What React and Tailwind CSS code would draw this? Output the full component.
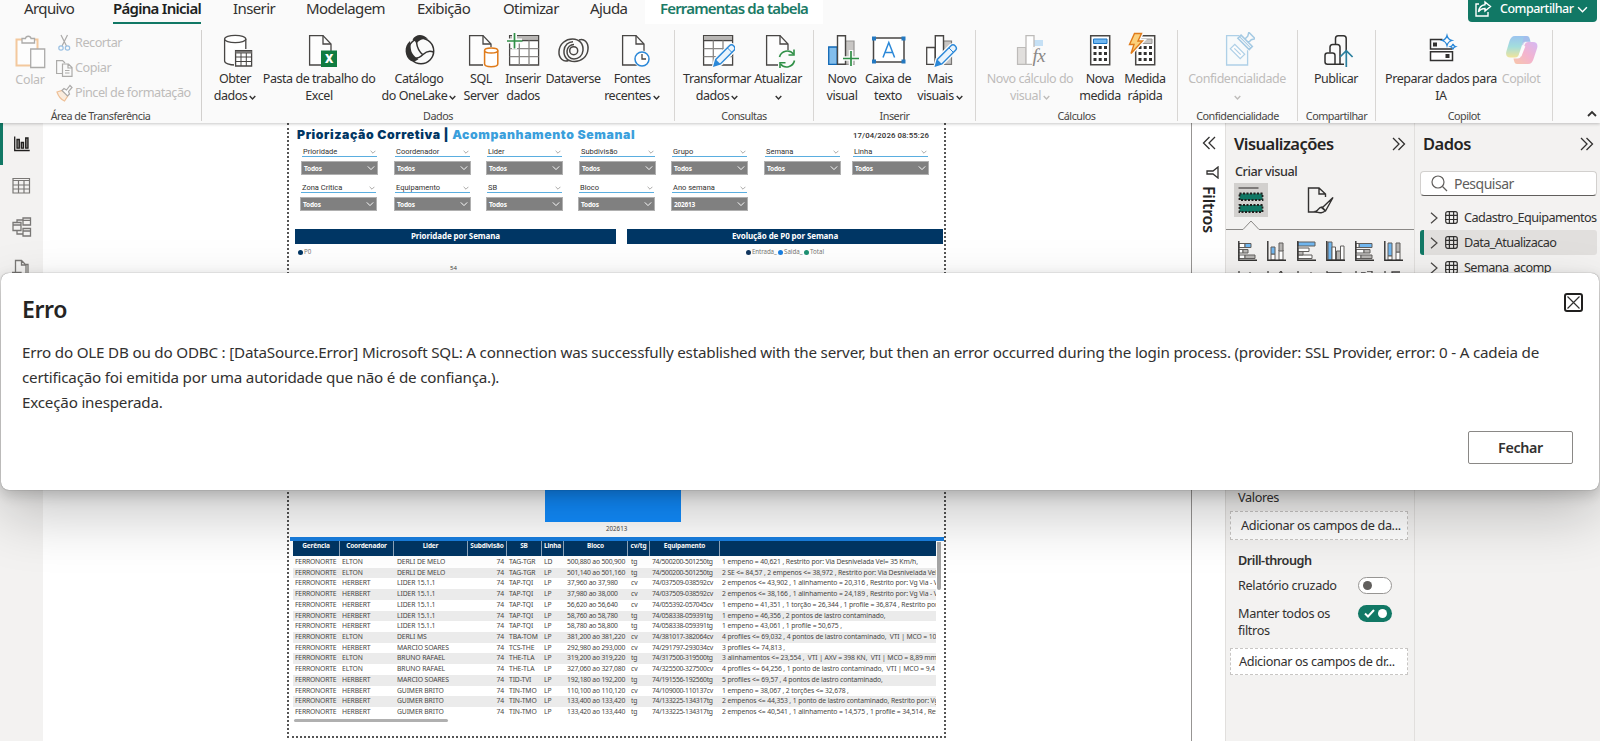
import clsx from "clsx";

const INK = "#484644";
const GREEN = "#117865";

const Chevron = ({ size = 7, className = "", width = 1.6 }) => (
  <svg width={size} height={size} viewBox="0 0 10 10" fill="none" className={className}>
    <path d="M1 3l4 4 4-4" stroke="currentColor" strokeWidth={width} />
  </svg>
);

// ---------- ribbon icons ----------
const Svg = ({ children, opacity = 1 }) => (
  <svg width="36" height="36" viewBox="0 0 36 36" fill="none" opacity={opacity} className="shrink-0">
    {children}
  </svg>
);

const Doc = ({ x = 7 }) => (
  <g transform={`translate(${x} 3)`} stroke={INK} strokeWidth="1.3">
    <path d="M.6.6h13.4l8 8.4v21H.6z" fill="#fdfdfd" />
    <path d="M14 .6V9h8" />
  </g>
);

const Grid = () => (
  <g stroke={INK} strokeWidth="1.3">
    <path d="M4.6 3.6h29v29.4h-29z" fill="#fff" />
    <path d="M5 4h28v4.5H5z" fill="#b8b6b4" stroke="none" />
    <path d="M4.6 8.6h29" />
    <path d="M4.6 16.6h29M4.6 24.6h29M14.3 8.6V33M24 8.6V33" stroke="#8a8886" />
  </g>
);

const Pencil = ({ x = 0 }) => (
  <g transform={`translate(${x} 0)`}>
    <path d="M15 34l1.8-6.6L30.2 14a3.2 3.2 0 0 1 4.6 4.6L21.4 32z" fill="#fff" stroke="#fafafa" strokeWidth="4" />
    <path d="M15 34l1.8-6.6L30.2 14a3.2 3.2 0 0 1 4.6 4.6L21.4 32z" fill="#eaf4fc" stroke="#2b88d8" strokeWidth="1.4" />
    <path d="M15 34l1.8-6.6 4.6 4.6z" fill="#2b88d8" />
    <path d="M28.5 16l4.4 4.4" stroke="#2b88d8" />
  </g>
);

const Keypad = () => (
  <g>
    <path d="M8.7 3.7h19v29h-19z" fill="#fff" stroke={INK} strokeWidth="1.5" />
    <path
      d="M11.5 14h3v3h-3zM16.7 14h3v3h-3zM22 14h3v3h-3zM11.5 20h3v3h-3zM16.7 20h3v3h-3zM22 20h3v3h-3zM11.5 26h3v3h-3zM16.7 26h3v3h-3zM22 26h3v3h-3z"
      fill="#323130"
    />
  </g>
);

const icons = {
  obter: (
    <Svg>
      <path d="M7.6 7v22c0 2.2 5 4 10.6 4s10.6-1.8 10.6-4V7" stroke={INK} strokeWidth="1.3" fill="#fff" />
      <ellipse cx="18.2" cy="7" rx="10.6" ry="3.6" stroke={INK} strokeWidth="1.3" fill="#fff" />
      <path d="M17 17h19v19H17z" fill="#fafafa" />
      <path d="M18.6 18.6h16v15.4h-16z" fill="#fff" stroke={INK} strokeWidth="1.3" />
      <path d="M18.6 20.3h16" stroke="#797775" strokeWidth="2.6" />
      <path d="M18.6 25h16M18.6 29.500h16M24 21v13M29.300 21v13" stroke={INK} />
    </Svg>
  ),
  excel: (
    <Svg>
      <Doc x={8} />
      <path d="M20 18.5h16v16.5H20z" fill="#107c41" />
      <text x="28" y="31" textAnchor="middle" fontSize="11.5" fontWeight="800" fill="#fff" fontFamily="Open Sans">
        X
      </text>
    </Svg>
  ),
  onelake: (
    <Svg>
      <circle cx="20" cy="19" r="12.7" stroke="#323130" strokeWidth="1.5" />
      <path d="M10 29C3.500 25 2.500 14 9 9c1.200 5.500-.2 9.500 3.500 14 1.500 2 3.200 3 5 4-2 2-5 3-7.500 2z" fill="#323130" />
      <path d="M11.500 7.500C15 1.500 22 1.500 27 7c-4.500-.8-9 1-11.500 4.500-.8-1.700-2-3-4-4z" fill="#323130" />
      <path d="M15.500 10c.5 5.500 3 10 6.500 13M32.500 20c-4.500-2-7.500-.5-10.500 2.500s-6.500 5-12 3" stroke="#323130" strokeWidth="1.5" />
    </Svg>
  ),
  sql: (
    <Svg>
      <Doc x={6} />
      <path d="M20 15h16v21H20z" fill="#fafafa" />
      <path d="M21.6 18.5V32c0 1.5 3 2.7 6.6 2.7s6.6-1.2 6.6-2.7V18.500" stroke="#e07b1a" strokeWidth="1.5" fill="#fff" />
      <ellipse cx="28.2" cy="18.5" rx="6.6" ry="2.5" stroke="#e07b1a" strokeWidth="1.5" fill="#fff" />
    </Svg>
  ),
  inserir: (
    <Svg>
      <Grid />
      <path d="M9.500 1v16M2 9h15" stroke="#fafafa" strokeWidth="5" />
      <path d="M9.500 1v15.500M2 9h15.500" stroke="#2f8f46" strokeWidth="1.7" />
    </Svg>
  ),
  dataverse: (
    <Svg>
      <g stroke={INK} strokeWidth="1.5">
        <path d="M13.500 28.500C8.500 30.500 3.500 26 4 19.500 4.500 11.500 11 7 17.500 7c7 0 11 5 10.500 11.500-.5 5.500-4.500 8.500-9 8.500-4 0-7.500-3.500-7-8 .3-4 3.500-6.500 7-6.500" />
        <path d="M24 8c5-2 9.500 2.500 9 9C32.500 25 26 29.500 19.500 29.500c-7 0-11-4.500-10.500-11C9.500 13 13.500 9.700 18 9.700" />
        <circle cx="18.700" cy="18.700" r="4" />
      </g>
    </Svg>
  ),
  fontes: (
    <Svg>
      <Doc x={8} />
      <circle cx="28" cy="27" r="8.5" fill="#fafafa" />
      <circle cx="28" cy="27" r="7" stroke="#2b88d8" strokeWidth="1.5" fill="#fff" />
      <path d="M28 22v5h4" stroke={INK} strokeWidth="1.3" />
    </Svg>
  ),
  transformar: (
    <Svg>
      <Grid />
      <Pencil />
    </Svg>
  ),
  atualizar: (
    <Svg>
      <Doc x={6} />
      <path d="M18 18h18v17H18z" fill="#fafafa" />
      <path d="M19.500 25a8 8 0 0 1 14-3M34.500 28.500a8 8 0 0 1-14 3.500" stroke="#2f8f46" strokeWidth="1.6" />
      <path d="M34 17.500V23h-5.500M20 36v-5.200h5.500" stroke="#2f8f46" strokeWidth="1.6" />
    </Svg>
  ),
  novo: (
    <Svg>
      <path d="M4.700 15h8.500v17.300H4.700z" fill="#83beec" stroke="#1068b5" strokeWidth="1.3" />
      <path d="M21.500 9h8.500v23.300h-8.500z" fill="#c8c6c4" stroke="#979593" strokeWidth="1.2" />
      <path d="M13.500 3.700h8v28.600h-8z" fill="#fff" stroke={INK} strokeWidth="1.4" />
      <path d="M27 18v17M19 26.500h17" stroke="#fafafa" strokeWidth="4.5" />
      <path d="M27 19v15M19 26.500h16" stroke="#2f8f46" strokeWidth="1.7" />
    </Svg>
  ),
  caixa: (
    <Svg>
      <path d="M3.500 6h30.500v24H3.500z" fill="#fff" stroke={INK} strokeWidth="1.5" />
      <path d="M2 4.500h4v4H2zM31.500 4.500h4v4h-4zM2 27.500h4v4H2zM31.500 27.500h4v4h-4z" fill="#2378c0" />
      <path d="M13 25.500l5.800-15 5.800 15M15 20.500h7.600" stroke="#2b88d8" strokeWidth="1.5" />
    </Svg>
  ),
  mais: (
    <Svg>
      <path d="M4.700 15.500h8.500v16.800H4.700z" fill="#fff" stroke={INK} strokeWidth="1.3" />
      <path d="M21.500 9h8v23.300h-8z" fill="#c8c6c4" stroke="#797775" strokeWidth="1.2" />
      <path d="M13.300 3.700h8.200v28.600h-8.200z" fill="#fff" stroke={INK} strokeWidth="1.4" />
      <Pencil x={-1.5} />
    </Svg>
  ),
  calculo: (
    <Svg>
      <path d="M5.500 15.500H14v16.800H5.500z" fill="#e1dfdd" stroke="#bdbbb9" strokeWidth="1.2" />
      <path d="M22 8h9v6h-9z" fill="#c5e0f5" />
      <path d="M14 3.700h8v28.600h-8z" fill="#fff" stroke="#bdbbb9" strokeWidth="1.3" />
      <path d="M20 15h15v18H20z" fill="#fafafa" />
      <text x="20.500" y="29.500" fontSize="19" fontStyle="italic" fill="#8a8886" fontFamily="Liberation Serif">
        fx
      </text>
    </Svg>
  ),
  medida: (
    <Svg>
      <Keypad />
      <path d="M11.500 7h13.500v4.500H11.500z" fill="#71b7f0" stroke="#1d76c4" />
    </Svg>
  ),
  rapida: (
    <Svg>
      <Keypad />
      <path d="M14 7h11v4.500H14z" fill="#c8c6c4" stroke="#979593" />
      <path d="M7.500 1.500h7L11 9h4.500L4 21.500 7 12.500H2.500z" fill="#fbd07c" stroke="#fafafa" strokeWidth="4" />
      <path d="M7.500 1.500h7L11 9h4.500L4 21.500 7 12.500H2.500z" fill="#fbd07c" stroke="#e07b1a" strokeWidth="1.4" />
    </Svg>
  ),
  confid: (
    <Svg opacity={0.6}>
      <path d="M7.600 3.600h21v29.400h-21z" fill="#f6fafd" stroke="#7db5db" strokeWidth="1.3" />
      <g transform="translate(18.500 19.500) rotate(45)" stroke="#7db5db" strokeWidth="1.2">
        <path d="M-7-3.200H7v6.400H-7z" fill="#fff" />
        <path d="M-4.500 0h9" />
      </g>
      <g transform="translate(27 9.500) rotate(45)">
        <path d="M-9-9H9V5H-9z" fill="#fafafa" />
        <path d="M-8-1H8v4.500H-8zM-2.500-1v-4l-2-3.500h9L2.500-5v4" stroke="#6aa9d4" strokeWidth="1.5" />
        <path d="M-8 1.200H8" stroke="#6aa9d4" />
      </g>
    </Svg>
  ),
  publicar: (
    <Svg>
      <g stroke="#323130" strokeWidth="1.5">
        <path d="M17.500 12.500V6.500c0-1.700 1-2.800 2.700-2.800h5.200c1.700 0 2.800 1.100 2.800 2.800V32" />
        <path d="M12 20.500v-5.200c0-1.700 1-2.800 2.700-2.800h4.600c1.700 0 2.700 1.100 2.700 2.800V32" />
        <path d="M7 23.500c0-1.700.8-2.500 2.400-2.500h5.200c1.600 0 2.400.8 2.400 2.500v8.700H9.400C7.800 32.200 7 31.400 7 29.700zM17 32.200h10" />
      </g>
      <path d="M28 20v14" stroke="#fafafa" strokeWidth="4" />
      <path d="M28.300 35V19M22 25l6.300-6.300 6.300 6.300" stroke="#2a7f9e" strokeWidth="1.7" />
    </Svg>
  ),
  preparar: (
    <Svg>
      <g stroke="#323130" strokeWidth="1.5">
        <path d="M19.500 7.500H7.500v9.500h22" />
        <path d="M7.500 19.800h22v8.700h-22z" fill="#fff" />
      </g>
      <path d="M10 10.500h4v4h-4zM22.500 22h4v4h-4z" fill="#323130" />
      <path
        d="M24 3.500c.8 3 2 4.300 4.800 5-2.800.8-4 2-4.800 5-.8-3-2-4.200-4.800-5 2.800-.7 4-2 4.800-5zM30 12c.3 1.500 1 2.200 2.500 2.600-1.500.5-2.200 1.200-2.500 2.700-.4-1.500-1-2.200-2.500-2.700 1.500-.4 2.100-1.100 2.500-2.600z"
        stroke="#2b88d8"
        strokeWidth="1.3"
        fill="#fff"
      />
    </Svg>
  ),
  copilot: (
    <Svg opacity={0.5}>
      <defs>
        <linearGradient id="cpA" x1="0" y1="0" x2="0" y2="1">
          <stop offset="0" stopColor="#3f8fe6" />
          <stop offset=".5" stopColor="#4fc3c0" />
          <stop offset="1" stopColor="#e9d03f" />
        </linearGradient>
        <linearGradient id="cpB" x1="1" y1="0" x2="0" y2="1">
          <stop offset="0" stopColor="#b07af0" />
          <stop offset=".5" stopColor="#ee6fa6" />
          <stop offset="1" stopColor="#f7935a" />
        </linearGradient>
      </defs>
      <path d="M24 4H12C9 4 7.500 6 6.500 9L3.500 19c-1.200 4 .2 6.500 4 6.500H12c2.500 0 3.500-1.500 4.200-4L19 13c.8-2.500 1.800-3.500 4-3.500h4.500C26.800 7 26.500 4 24 4z" fill="url(#cpA)" />
      <path d="M14 32h11c3 0 4.500-2 5.500-5l3.500-10.500c1.200-4-.2-6.500-4-6.500h-4.500c-2.500 0-3.500 1.500-4.200 4l-2.800 9c-.8 2.500-1.800 3.500-4 3.500H10.500c.7 2.500 1 5.500 3.500 5.500z" fill="url(#cpB)" />
      <path d="M22 4c3.500 0 4.500 3 5.500 6h-5c-1.500.5-2 1.700-2.500 3.300l-1-.3 1-5c.5-2 1-3.500 2-4z" fill="#5a6fe0" opacity=".6" />
      <path d="M20.500 13.500l1.800 1-4 10-2.300-1.500z" fill="#fff" />
    </Svg>
  ),
};

const groups = [
  {
    label: "Dados",
    width: "w-[473px]",
    items: [
      { icon: "obter", a: "Obter", b: "dados", menu: true, width: "w-[66px]" },
      { icon: "excel", a: "Pasta de trabalho do", b: "Excel", width: "w-[102px]" },
      { icon: "onelake", a: "Catálogo", b: "do OneLake", menu: true, width: "w-[98px]" },
      { icon: "sql", a: "SQL", b: "Server", width: "w-[26px]" },
      { icon: "inserir", a: "Inserir", b: "dados", width: "w-[58px]" },
      { icon: "dataverse", a: "Dataverse", width: "w-[42px]" },
      { icon: "fontes", a: "Fontes", b: "recentes", menu: true, width: "w-[76px]" },
    ],
  },
  {
    label: "Consultas",
    width: "w-[139px]",
    items: [
      { icon: "transformar", a: "Transformar", b: "dados", menu: true, width: "w-[84px]" },
      { icon: "atualizar", a: "Atualizar", menu: true, width: "w-[38px]" },
    ],
  },
  {
    label: "Inserir",
    width: "w-[162px]",
    items: [
      { icon: "novo", a: "Novo", b: "visual", width: "w-[56px]" },
      { icon: "caixa", a: "Caixa de", b: "texto", width: "w-[36px]" },
      { icon: "mais", a: "Mais", b: "visuais", menu: true, width: "w-[68px]" },
    ],
  },
  {
    label: "Cálculos",
    width: "w-[202px]",
    items: [
      { icon: "calculo", a: "Novo cálculo do", b: "visual", menu: true, off: true, width: "w-[108px]" },
      { icon: "medida", a: "Nova", b: "medida", width: "w-[32px]" },
      { icon: "rapida", a: "Medida", b: "rápida", width: "w-[58px]" },
    ],
  },
  {
    label: "Confidencialidade",
    width: "w-[120px]",
    items: [{ icon: "confid", a: "Confidencialidade", menu: true, off: true, width: "w-[118px]" }],
  },
  {
    label: "Compartilhar",
    width: "w-[78px]",
    items: [{ icon: "publicar", a: "Publicar", width: "w-[76px]" }],
  },
  {
    label: "Copilot",
    width: "w-[177px]",
    items: [
      { icon: "preparar", a: "Preparar dados para", b: "IA", width: "w-[130px]" },
      { icon: "copilot", a: "Copilot", off: true, width: "w-[30px]" },
    ],
  },
];

const tabs = [
  { name: "Arquivo", width: "w-[90px]" },
  { name: "Página Inicial", width: "w-[119px]", active: true },
  { name: "Inserir", width: "w-[73px]" },
  { name: "Modelagem", width: "w-[111px]" },
  { name: "Exibição", width: "w-[86px]" },
  { name: "Otimizar", width: "w-[87px]" },
  { name: "Ajuda", width: "w-[55px]" },
];

const RibbonButton = ({ item }) => (
  <div
    className={clsx(
      "flex shrink-0 flex-col items-center text-[12.5px] leading-[17px] tracking-[-0.45px] whitespace-nowrap",
      item.width,
      item.off ? "text-[#bebcba]" : "text-[#323130]"
    )}
  >
    {icons[item.icon]}
    <span className="mt-[2px]">{item.a}</span>
    <span className="flex h-[17px] items-center gap-[2px]">
      {item.b}
      {item.menu && <Chevron className="mt-[3px]" width={2} />}
    </span>
  </div>
);

const GroupLabel = ({ children }) => (
  <div className="mt-px text-center text-[10.8px] leading-[16px] tracking-[-0.5px] whitespace-nowrap text-[#484644]">{children}</div>
);

const Clipboard = () => (
  <div className="flex h-[91px] w-[202px] flex-col border-r border-[#d2d0ce] text-[#bebcba]">
    <div className="flex h-[77px] shrink-0 pl-[15px]">
      <div className="flex w-[30px] flex-col items-center pt-[3px] text-[12.5px] leading-[17px] tracking-[-0.3px]">
        <Svg opacity={0.6}>
          <path d="M4.500 6.500h21v26h-21z" stroke="#f0a860" strokeWidth="2" fill="#fff" />
          <path d="M10 5.500h3.500c.5-3 5-3 5.500 0h3.500V10H10z" stroke="#797775" fill="#fff" strokeWidth="1.3" />
          <path d="M18.700 16h14v18.500h-14z" stroke="#797775" fill="#fff" strokeWidth="1.3" />
        </Svg>
        <span className="mt-[2px]">Colar</span>
      </div>
      <div className="ml-[10px] flex flex-col text-[12.7px] leading-[25px] tracking-[-0.5px] whitespace-nowrap">
        <div className="flex items-center">
          <svg width="18" height="18" viewBox="0 0 18 18" fill="none" opacity=".6" className="mr-[2px]">
            <path d="M6 1l5.500 11M12.500 1L7 12" stroke="#797775" strokeWidth="1.2" />
            <circle cx="6" cy="14" r="2.2" stroke="#5b9bd5" strokeWidth="1.2" />
            <circle cx="12.5" cy="14" r="2.2" stroke="#5b9bd5" strokeWidth="1.2" />
          </svg>
          Recortar
        </div>
        <div className="flex items-center">
          <svg width="18" height="18" viewBox="0 0 18 18" fill="none" opacity=".6" className="mr-[2px]">
            <path d="M7.500 14.500H1.600V1.600h6L10 4" stroke="#797775" strokeWidth="1.2" />
            <path d="M7.500 5h6l3.500 3.500v8.900H7.500zM13 5v4h4M10 11.500h4.500M10 14h4.500" stroke="#797775" strokeWidth="1.2" />
          </svg>
          Copiar
        </div>
        <div className="flex items-center">
          <svg width="18" height="18" viewBox="0 0 18 18" fill="none" opacity=".6" className="mr-[2px]">
            <path d="M2 8l5-1.500 6 5L9.500 17C6 15.500 3.500 12.500 2 8z" fill="#fbe3cb" stroke="#e89a55" strokeWidth="1.2" />
            <path d="M7 6.500l2-2 2.500 1.500L15 1.500l2 2-3.500 4 1 2.500-2 2z" fill="#fff" stroke="#797775" strokeWidth="1.2" />
          </svg>
          Pincel de formatação
        </div>
      </div>
    </div>
    <GroupLabel>Área de Transferência</GroupLabel>
  </div>
);

const Ribbon = () => (
  <header className="relative z-10 h-[123px] shrink-0 bg-[#fafafa] shadow-[0_1px_3px_rgba(0,0,0,0.22)]">
    <div className="flex h-[24px] items-start pl-[24px] text-[15px] leading-[17px] tracking-[-0.6px] whitespace-nowrap text-[#323130]">
      {tabs.map(t => (
        <div key={t.name} className={clsx("shrink-0", t.width)}>
          {t.active ? (
            <span className="-ml-px inline-block h-[24px] border-b-2 border-[#117865] font-semibold tracking-[-0.72px] text-[#201f1e]">
              {t.name}
            </span>
          ) : (
            t.name
          )}
        </div>
      ))}
      <div className="h-[24px] w-[178px] bg-white text-center font-semibold tracking-[-0.82px] text-[#1b7a66]">
        Ferramentas da tabela
      </div>
      <div className="mr-[3px] ml-auto flex h-[22px] w-[129px] items-start rounded-b-[4px] bg-[#117865] pl-[6px] text-[12.5px] font-medium tracking-[-0.5px] text-white">
        <svg width="18" height="18" viewBox="0 0 18 18" fill="none" stroke="#fff" strokeWidth="1.4">
          <path d="M5 4H2v12h12v-4" />
          <path d="M11 2l5.500 4.500L11 11V8.500C8 8.500 6 9.500 4.500 12 5 7.500 7.500 5 11 4.700z" />
        </svg>
        <span className="ml-[8px] w-[77px]">Compartilhar</span>
        <Chevron size={11} width={1.3} className="mt-[4px]" />
      </div>
    </div>
    <div className="flex h-[93px] pt-[6px]">
      <Clipboard />
      {groups.map(g => (
        <div key={g.label} className={clsx("flex h-[91px] shrink-0 flex-col border-r border-[#d8d6d4]", g.width)}>
          <div className="flex h-[77px] shrink-0 pt-[2px]">
            {g.items.map(i => (
              <RibbonButton key={i.a} item={i} />
            ))}
          </div>
          <GroupLabel>{g.label}</GroupLabel>
        </div>
      ))}
      <div className="flex flex-1 items-end justify-end pr-[3px]">
        <Chevron size={10} width={1.8} className="mb-[-2px] rotate-180 text-[#323130]" />
      </div>
    </div>
  </header>
);

const Rail = () => (
  <nav className="flex w-[43px] shrink-0 flex-col bg-[#f3f2f1]">
    <div className="flex h-[42px] items-center border-l-[3px] border-[#117865] pl-[11px]">
      <svg width="16" height="16" viewBox="0 0 16 16" fill="none" stroke="#201f1e" strokeWidth="1.3">
        <path d="M.7.500v14h15" />
        <path d="M3 3.500h2.300v8.700H3zM7.300 6.500h2.200v5.700H7.300zM11.700 2H14v10.200h-2.300z" fill="#979593" />
      </svg>
    </div>
    <div className="flex h-[41px] items-center pl-[12px]">
      <svg width="19" height="18" viewBox="0 0 19 18" fill="none" stroke="#797775" strokeWidth="1.2">
        <path d="M1 1.500h16.500v14.500H1zM1 3.500h16.500M1 8h16.500M1 12h16.500M6.500 3.500V16M12 3.500V16" />
      </svg>
    </div>
    <div className="flex h-[42px] items-center pl-[12px]">
      <svg width="20" height="20" viewBox="0 0 20 20" fill="none" stroke="#797775" strokeWidth="1.3">
        <path d="M1 5.500h8v8H1zM1 8h8M11 1h7.500v7H11zM11 3.300h7.500M11 11.500h7.500v7.500H11zM11 14h7.500M5 5.500V3h6M5 13.500V17h6" />
      </svg>
    </div>
    <div className="flex h-[41px] items-center pl-[12px]">
      <svg width="20" height="20" viewBox="0 0 20 20" fill="none" stroke="#797775" strokeWidth="1.3">
        <path d="M3.500 13V1.500h6L14 6v13M9.500 1.500V6H14M14 5.500h2V18M0 13.500h9v5H0z" />
      </svg>
    </div>
  </nav>
);

const Slicer = ({ name, value = "Todos" }) => (
  <div className="w-[77px]">
    <div className="ml-px flex h-[9px] w-[75px] items-center justify-between border-b border-[#5aaee0] pr-px pl-px font-[Roboto,sans-serif] text-[7.5px] leading-[8px] text-[#323130]">
      <span>{name}</span>
      <Chevron size={6} width={1.2} className="text-[#8a8886]" />
    </div>
    <div className="mt-[4px] flex h-[14px] items-center justify-between border border-[#b0b0b0] bg-[#808080] pr-[2px] pl-[2px] text-[6.5px] leading-[8px] font-bold tracking-[-0.2px] text-white">
      <span className="pt-px">{value}</span>
      <Chevron size={8} width={1.2} />
    </div>
  </div>
);

const rows = [
  ["ELTON", "DERLI DE MELO", "TAG-TGR", "LD", "500,880 ao 500,900", "tg", "74/500200-501250tg", "1 empeno = 40,621 , Restrito por: Via Desnivelada Vel= 35 Km/h,"],
  ["ELTON", "DERLI DE MELO", "TAG-TGR", "LP", "501,140 ao 501,160", "tg", "74/500200-501250tg", "2 SE <= 84,57 , 2 empenos <= 38,972 , Restrito por: Via Desnivelada Vel"],
  ["HERBERT", "LIDER 15.1.1", "TAP-TQI", "LP", "37,960 ao 37,980", "cv", "74/037509-038592cv", "2 empenos <= 43,902 , 1 alinhamento = 20,316 , Restrito por: Vg Via - V"],
  ["HERBERT", "LIDER 15.1.1", "TAP-TQI", "LP", "37,980 ao 38,000", "cv", "74/037509-038592cv", "2 empenos <= 38,166 , 1 alinhamento = 24,189 , Restrito por: Vg Via - V"],
  ["HERBERT", "LIDER 15.1.1", "TAP-TQI", "LP", "56,620 ao 56,640", "cv", "74/055392-057045cv", "1 empeno = 41,351 , 1 torção = 26,344 , 1 profile = 36,874 , Restrito por"],
  ["HERBERT", "LIDER 15.1.1", "TAP-TQI", "LP", "58,760 ao 58,780", "tg", "74/058338-059391tg", "1 empeno = 46,356 , 2 pontos de lastro contaminado,"],
  ["HERBERT", "LIDER 15.1.1", "TAP-TQI", "LP", "58,780 ao 58,800", "tg", "74/058338-059391tg", "1 empeno = 43,061 , 1 profile = 50,675 ,"],
  ["ELTON", "DERLI MS", "TBA-TOM", "LP", "381,200 ao 381,220", "cv", "74/381017-382064cv", "4 profiles <= 69,032 , 4 pontos de lastro contaminado,  VTI | MCO = 10,"],
  ["HERBERT", "MARCIO SOARES", "TCS-THE", "LP", "292,980 ao 293,000", "cv", "74/291797-293034cv", "3 profiles <= 74,813 ,"],
  ["ELTON", "BRUNO RAFAEL", "THE-TLA", "LP", "319,200 ao 319,220", "tg", "74/317500-319500tg", "3 alinhamentos <= 23,554 ,  VTI | AXV = 398 KN,  VTI | MCO = 8,89 mm,"],
  ["ELTON", "BRUNO RAFAEL", "THE-TLA", "LP", "327,060 ao 327,080", "cv", "74/325500-327500cv", "4 profiles <= 64,256 , 1 ponto de lastro contaminado,  VTI | MCO = 9,4 m"],
  ["HERBERT", "MARCIO SOARES", "TID-TVI", "LP", "192,180 ao 192,200", "tg", "74/191556-192560tg", "5 profiles <= 69,57 , 4 pontos de lastro contaminado,"],
  ["HERBERT", "GUIMER BRITO", "TIN-TMO", "LP", "110,100 ao 110,120", "cv", "74/109000-110137cv", "1 empeno = 38,067 , 2 torções <= 32,678 ,"],
  ["HERBERT", "GUIMER BRITO", "TIN-TMO", "LP", "133,400 ao 133,420", "tg", "74/133225-134317tg", "2 empenos <= 44,353 , 1 ponto de lastro contaminado, Restrito por: Vg"],
  ["HERBERT", "GUIMER BRITO", "TIN-TMO", "LP", "133,420 ao 133,440", "tg", "74/133225-134317tg", "2 empenos <= 40,541 , 1 alinhamento = 14,575 , 1 profile = 34,514 , Res"],
];

const columns = ["Gerência", "Coordenador", "Lider", "Subdivisão", "SB", "Linha", "Bloco", "cv/tg", "Equipamento", ""];
const tableGrid = "grid grid-cols-[47px_54px_74px_39px_35px_22px_64px_22px_70px_216px]";

const Table = () => (
  <div className="ml-[4px] flex w-[649px]">
    <div className="w-[643px] overflow-hidden">
      <div className={clsx(tableGrid, "h-[15px] bg-[#003664] text-[6.5px] leading-[10px] font-bold tracking-[-0.15px] text-white")}>
        {columns.map((c, i) => (
          <div key={i} className={clsx("text-center", i < 9 && "border-r border-[#8fa6bc]")}>
            {c}
          </div>
        ))}
      </div>
      <div className="pt-[1px]">
        {rows.map((r, i) => (
          <div
            key={i}
            className={clsx(
              tableGrid,
              "h-[10.73px] text-[6.8px] leading-[10.5px] tracking-[-0.12px] whitespace-pre text-[#484644]",
              i % 2 ? "bg-[#ebebeb]" : "bg-white"
            )}
          >
            <span className="pl-[2px] tracking-[-0.2px]">FERRONORTE</span>
            <span className="pl-[2px]">{r[0]}</span>
            <span className="pl-[3px]">{r[1]}</span>
            <span className="pr-[3px] text-right">74</span>
            <span className="pl-[2px]">{r[2]}</span>
            <span className="pl-[2px]">{r[3]}</span>
            <span className="pl-[3px] tracking-[-0.2px]">{r[4]}</span>
            <span className="pl-[3px]">{r[5]}</span>
            <span className="pl-[2px] tracking-[-0.28px]">{r[6]}</span>
            <span className="overflow-hidden pl-[2px]">{r[7]}</span>
          </div>
        ))}
      </div>
      <div className="mt-px ml-px h-[3px] w-[154px] rounded-full bg-[#b0b0b0]"></div>
    </div>
    <div className="mt-px ml-[1px] h-[48px] w-[4px] rounded-b bg-[#a6a6a6]"></div>
  </div>
);

const Dot = ({ color }) => <span className={clsx("size-[5px] rounded-full", color)}></span>;

const Report = () => (
  <div className="ml-[244px] h-[615px] w-[659px] border-2 border-t-0 border-dotted border-[#555] bg-white">
    <div className="flex h-[23px] items-start justify-between pt-[3px] pr-[15px] pl-[8px]">
      <div className="font-[Inter,sans-serif] text-[12.3px] leading-[18px] font-black tracking-[0.58px] whitespace-nowrap text-[#003664]">
        Priorização Corretiva | <span className="text-[#3b9fdc]">Acompanhamento Semanal</span>
      </div>
      <div className="pt-[2px] font-[Roboto,sans-serif] text-[7.8px] leading-[16px] font-medium tracking-[0.1px] text-[#323130]">
        17/04/2026 08:55:26
      </div>
    </div>
    <div className="mt-[2px] ml-[12px] grid grid-cols-[93px_92px_93px_92px_93px_88px_77px]">
      <Slicer name="Prioridade" />
      <Slicer name="Coordenador" />
      <Slicer name="Lider" />
      <Slicer name="Subdivisão" />
      <Slicer name="Grupo" />
      <Slicer name="Semana" />
      <Slicer name="Linha" />
    </div>
    <div className="mt-[9px] ml-[11px] grid grid-cols-[94px_92px_92px_93px_77px]">
      <Slicer name="Zona Critica" />
      <Slicer name="Equipamento" />
      <Slicer name="SB" />
      <Slicer name="Bloco" />
      <Slicer name="Ano semana" value="202613" />
    </div>
    <div className="mt-[18px] ml-[6px] flex gap-[11px] text-center text-[8px] leading-[13px] font-bold tracking-[-0.1px] text-white">
      <div className="h-[15px] w-[321px] bg-[#003664]">Prioridade por Semana</div>
      <div className="h-[15px] w-[316px] bg-[#003664]">Evolução de P0 por Semana</div>
    </div>
    <div className="mt-[3px] flex h-[10px] text-[6.2px] leading-[10px] text-[#797775]">
      <div className="ml-[9px] flex w-[448px] items-center gap-px">
        <Dot color="bg-[#003664]" />
        P0
      </div>
      <div className="flex items-center gap-px">
        <Dot color="bg-[#12375f]" />
        <span className="w-[25px] tracking-[-0.1px]">Entrada_</span>
        <Dot color="bg-[#1a7fe0]" />
        <span className="w-[19px]">Saida_</span>
        <Dot color="bg-[#1f9173]" />
        Total
      </div>
    </div>
    <div className="mt-[6px] ml-[161px] h-[11px] text-[6px] leading-[10px] text-[#484644]">54</div>
    {/* plot area runs behind the dialog */}
    <div className="mt-[170px] ml-[256px] h-[78px] w-[136px] bg-[#118dff]"></div>
    <div className="h-[15px] pl-[317px] text-[6.2px] leading-[13px] text-[#484644]">202613</div>
    <div className="ml-[1px] h-[4px] w-[654px] bg-[#1a7fe0]"></div>
    <Table />
  </div>
);

const DoubleChevron = ({ className }) => (
  <svg width="14" height="14" viewBox="0 0 14 14" fill="none" stroke="#323130" strokeWidth="1.3" className={className}>
    <path d="M1 1l6 6-6 6M6.500 1l6 6-6 6" />
  </svg>
);

const Filters = () => (
  <aside className="flex w-[34px] shrink-0 flex-col items-center border-l border-[#979593] bg-white">
    <DoubleChevron className="mt-[13px] rotate-180" />
    <svg width="13" height="13" viewBox="0 0 13 13" fill="none" stroke="#323130" strokeWidth="1.3" className="mt-[16px] ml-[8px]">
      <path d="M12 1v11L7 8H1V5h6z" />
    </svg>
    <span className="mt-[7px] text-[16px] leading-[20px] font-semibold tracking-[-0.25px] text-[#252423] [writing-mode:vertical-rl]">
      Filtros
    </span>
  </aside>
);

const AXIS = "M.8 0v19.300H19";
const visuals = [
  <>
    <path d="M1 2.500h6v4H1z" fill="#fff" />
    <path d="M7 2.500h6v4H7z" fill="#71b7f0" />
    <path d="M1 8.500h4v3.500H1zM1 14h6v3.500H1z" fill="#fff" />
    <path d="M5 8.500h5v3.500H5zM7 14h10v3.500H7z" fill="#b8b6b4" />
  </>,
  <>
    <path d="M4 13h4v6H4zM12 9h4v10h-4z" fill="#fff" />
    <path d="M4 6h4v7H4z" fill="#71b7f0" />
    <path d="M12 2h4v8h-4z" fill="#b8b6b4" />
  </>,
  <>
    <path d="M1 1h17v4H1z" fill="#71b7f0" />
    <path d="M1 7h11v3.500H1zM1 14h14v3.500H1z" fill="#fff" />
    <path d="M1 10.500h5V14H1z" fill="#b8b6b4" />
  </>,
  <>
    <path d="M2 1h4v18H2z" fill="#71b7f0" />
    <path d="M6 6h3.500v13H6zM14.500 5H18v14h-3.500z" fill="#fff" />
    <path d="M10.500 10h4v9h-4z" fill="#b8b6b4" />
  </>,
  <>
    <path d="M4 2.500h13v4H4z" fill="#71b7f0" />
    <path d="M1 2.500h3v4H1zM1 8.500h8v3.500H1zM1 14h5v3.500H1z" fill="#fff" />
    <path d="M9 8.500h6v3.500H9zM6 14h11v3.500H6z" fill="#b8b6b4" />
  </>,
  <>
    <path d="M4 2h4v13H4z" fill="#71b7f0" />
    <path d="M4 15h4v4H4zM12 11h4v8h-4z" fill="#fff" />
    <path d="M12 2h4v9h-4z" fill="#b8b6b4" />
  </>,
];

// slices of the second gallery row that stay visible above the dialog
const nextVisuals = [
  "M1 0v8M8 7l4-5 4 3",
  "M1 0v8M10 6l4-6 3 6",
  "M1 0v8M8 7l6-5 4 5",
  "M1 0v8M1 2h14v6",
  "M1 0v8M6 2h4v6M12 0h5v8",
  "M1 0v8M8 8V1h8",
];

const Toggle = ({ on }) =>
  on ? (
    <span className="flex h-[17px] w-[34px] items-center justify-between rounded-full bg-[#117865] pr-[5px] pl-[6px]">
      <svg width="11" height="9" viewBox="0 0 11 9" fill="none">
        <path d="M1 4.500l3 3L10 1" stroke="#fff" strokeWidth="2" />
      </svg>
      <span className="size-[9px] rounded-full bg-white"></span>
    </span>
  ) : (
    <span className="flex h-[17px] w-[34px] items-center rounded-full border border-[#979593] bg-white pl-[4px]">
      <span className="size-[9px] rounded-full bg-[#605e5c]"></span>
    </span>
  );

const Visualizations = () => (
  <aside className="w-[189px] shrink-0 border-l border-[#e1dfdd] bg-[#f3f2f1] text-[12.7px] tracking-[-0.37px] text-[#323130]">
    <div className="flex h-[42px] items-center justify-between pr-[8px] pl-[8px]">
      <h2 className="text-[16.5px] font-semibold tracking-[-0.55px] text-[#252423]">Visualizações</h2>
      <DoubleChevron />
    </div>
    <div className="pl-[9px] leading-[12px] font-medium tracking-[-0.45px]">Criar visual</div>
    <div className="mt-[6px] flex h-[34px] items-center pl-[8px]">
      <div className="flex size-[34px] items-center justify-center bg-[#d2d0ce]">
        <svg width="26" height="28" viewBox="0 0 26 28" fill="none">
          <path d="M.5 2h20" stroke="#605e5c" strokeWidth="1.5" />
          <path d="M1.500 7.500h23v6.500h-23zM1.500 19h23v7h-23z" fill={GREEN} stroke="#201f1e" strokeWidth="1.8" strokeDasharray="2 1.5" />
        </svg>
      </div>
      <svg width="27" height="28" viewBox="0 0 27 28" fill="none" stroke="#323130" strokeWidth="1.4" className="ml-[39px]">
        <path d="M10 26H1.500V2H12l6.500 6v3M12 2v6h6.500" />
        <path d="M26 11.500L15 22M26 11.500l-7.500 13.500-3.500-3 11-10.500zM15 21c-4 0-3 4-6.500 4.500C12 27.500 17 27 18 24.500z" />
      </svg>
    </div>
    <svg width="188" height="14" viewBox="0 0 188 14" fill="none" className="block">
      <path d="M0 12.500h17L25 4l8 8.500h155" stroke="#8a8886" />
    </svg>
    <div className="mt-[10px] flex gap-[10.3px] pl-[12px]">
      {visuals.map((v, i) => (
        <svg key={i} width="19" height="20" viewBox="0 0 19 20" fill="none" strokeWidth="1" className="shrink-0">
          <g stroke="#605e5c">{v}</g>
          <path d={AXIS} stroke="#323130" strokeWidth="1.4" />
        </svg>
      ))}
    </div>
    <div className="mt-[10px] flex gap-[10.3px] pl-[12px]">
      {nextVisuals.map((d, i) => (
        <svg key={i} width="19" height="8" viewBox="0 0 19 8" fill="none" stroke="#484644" strokeWidth="1.3" className="shrink-0">
          <path d={d} />
        </svg>
      ))}
    </div>
    {/* rest of the gallery sits under the dialog */}
    <div className="mt-[209px] pl-[12px] leading-[18px]">Valores</div>
    <div className="mt-[5px] ml-[4px] h-[29px] w-[178px] border border-dashed border-[#c8c6c4] bg-white pl-[10px] leading-[27px] whitespace-nowrap">
      Adicionar os campos de da...
    </div>
    <div className="mt-[11px] pl-[12px] leading-[18px] font-semibold tracking-[-0.5px]">Drill-through</div>
    <div className="mt-[8px] flex items-center justify-between pr-[22px] pl-[12px] leading-[17px]">
      Relatório cruzado
      <Toggle />
    </div>
    <div className="mt-[11px] flex items-start justify-between pr-[22px] pl-[12px] leading-[17px]">
      <span>
        Manter todos os
        <br />
        filtros
      </span>
      <Toggle on />
    </div>
    <div className="mt-[9px] ml-[4px] h-[27px] w-[178px] border border-dashed border-[#c8c6c4] bg-white pl-[8px] leading-[24px] whitespace-nowrap">
      Adicionar os campos de dr...
    </div>
  </aside>
);

const DataPane = () => (
  <aside className="min-w-0 flex-1 border-l border-[#e1dfdd] bg-[#f3f2f1] pr-[3px] pl-[5px] text-[#323130]">
    <div className="flex h-[42px] items-center justify-between pr-[3px] pl-[3px]">
      <h2 className="text-[16.5px] font-semibold tracking-[-0.5px] text-[#252423]">Dados</h2>
      <DoubleChevron />
    </div>
    <div className="mt-[6px] flex h-[25px] items-center rounded-[4px] border border-[#d2d0ce] border-b-[#605e5c] bg-white pl-[10px] text-[14px] tracking-[-0.5px] text-[#605e5c]">
      <svg width="17" height="17" viewBox="0 0 17 17" fill="none" stroke="#605e5c" strokeWidth="1.2" className="mr-[6px]">
        <circle cx="7" cy="7" r="6" />
        <path d="M11.500 11.500l4.500 4.500" />
      </svg>
      Pesquisar
    </div>
    <div className="mt-[9px] text-[12.7px] tracking-[-0.6px]">
      {["Cadastro_Equipamentos", "Data_Atualizacao", "Semana_acomp"].map((name, i) => (
        <div
          key={name}
          className={clsx(
            "flex h-[25px] items-center border-l-4 pl-[6px] whitespace-nowrap",
            i === 1 ? "rounded-[3px] border-[#117865] bg-[#e1dfdd]" : "border-transparent"
          )}
        >
          <svg width="8" height="12" viewBox="0 0 8 12" fill="none" stroke="#484644" strokeWidth="1.2" className="shrink-0">
            <path d="M1 .7L7 6l-6 5.300" />
          </svg>
          <svg width="13" height="13" viewBox="0 0 13 13" fill="none" stroke="#323130" strokeWidth="1.2" className="mr-[6px] ml-[7px] shrink-0">
            <rect x=".7" y=".7" width="11.6" height="11.6" rx="2" />
            <path d="M.7 4.300h11.600M.7 8.500h11.600M4.400.7v11.600M8.600.7v11.600" />
          </svg>
          {name}
        </div>
      ))}
    </div>
  </aside>
);

const ErrorDialog = () => (
  <div className="absolute top-[273px] left-[1px] z-20 flex h-[217px] w-[1598px] flex-col rounded-[8px] bg-white px-[21px] text-[#323130] shadow-[0_0_1px_rgba(0,0,0,0.6),0_25px_57px_rgba(0,0,0,0.22),0_5px_14px_rgba(0,0,0,0.18)]">
    <div className="flex items-start justify-between">
      <h1 className="mt-[19px] text-[23px] leading-[34px] font-semibold tracking-[-0.4px] text-[#252423]">Erro</h1>
      <button className="mt-[20px] -mr-[5px] flex size-[19px] items-center justify-center rounded-[3px] border-2 border-[#201f1e]">
        <svg width="13" height="13" viewBox="0 0 13 13" stroke="#323130" strokeWidth="1.2">
          <path d="M.5.500l12 12M12.500.500l-12 12" />
        </svg>
      </button>
    </div>
    <p className="mt-[14px] text-[15.2px] leading-[25px] tracking-[-0.2px] whitespace-nowrap">
      Erro do OLE DB ou do ODBC : [DataSource.Error] Microsoft SQL: A connection was successfully established with the server, but
      then an error occurred during the login process. (provider: SSL Provider, error: 0 - A cadeia de
      <br />
      certificação foi emitida por uma autoridade que não é de confiança.).
      <br />
      Exceção inesperada.
    </p>
    <button className="mt-[16px] mr-[5px] h-[33px] w-[105px] self-end rounded-[2px] border border-[#8a8886] text-[14.3px] font-semibold tracking-[-0.35px]">
      Fechar
    </button>
  </div>
);

export default function App() {
  return (
    <div className="relative flex h-[741px] w-[1600px] flex-col overflow-hidden bg-white font-['Noto_Sans','Open_Sans',sans-serif]">
      <Ribbon />
      <div className="flex min-h-0 flex-1">
        <Rail />
        <main className="w-[1148px] shrink-0 bg-white">
          <Report />
        </main>
        <Filters />
        <Visualizations />
        <DataPane />
      </div>
      <ErrorDialog />
    </div>
  );
}
